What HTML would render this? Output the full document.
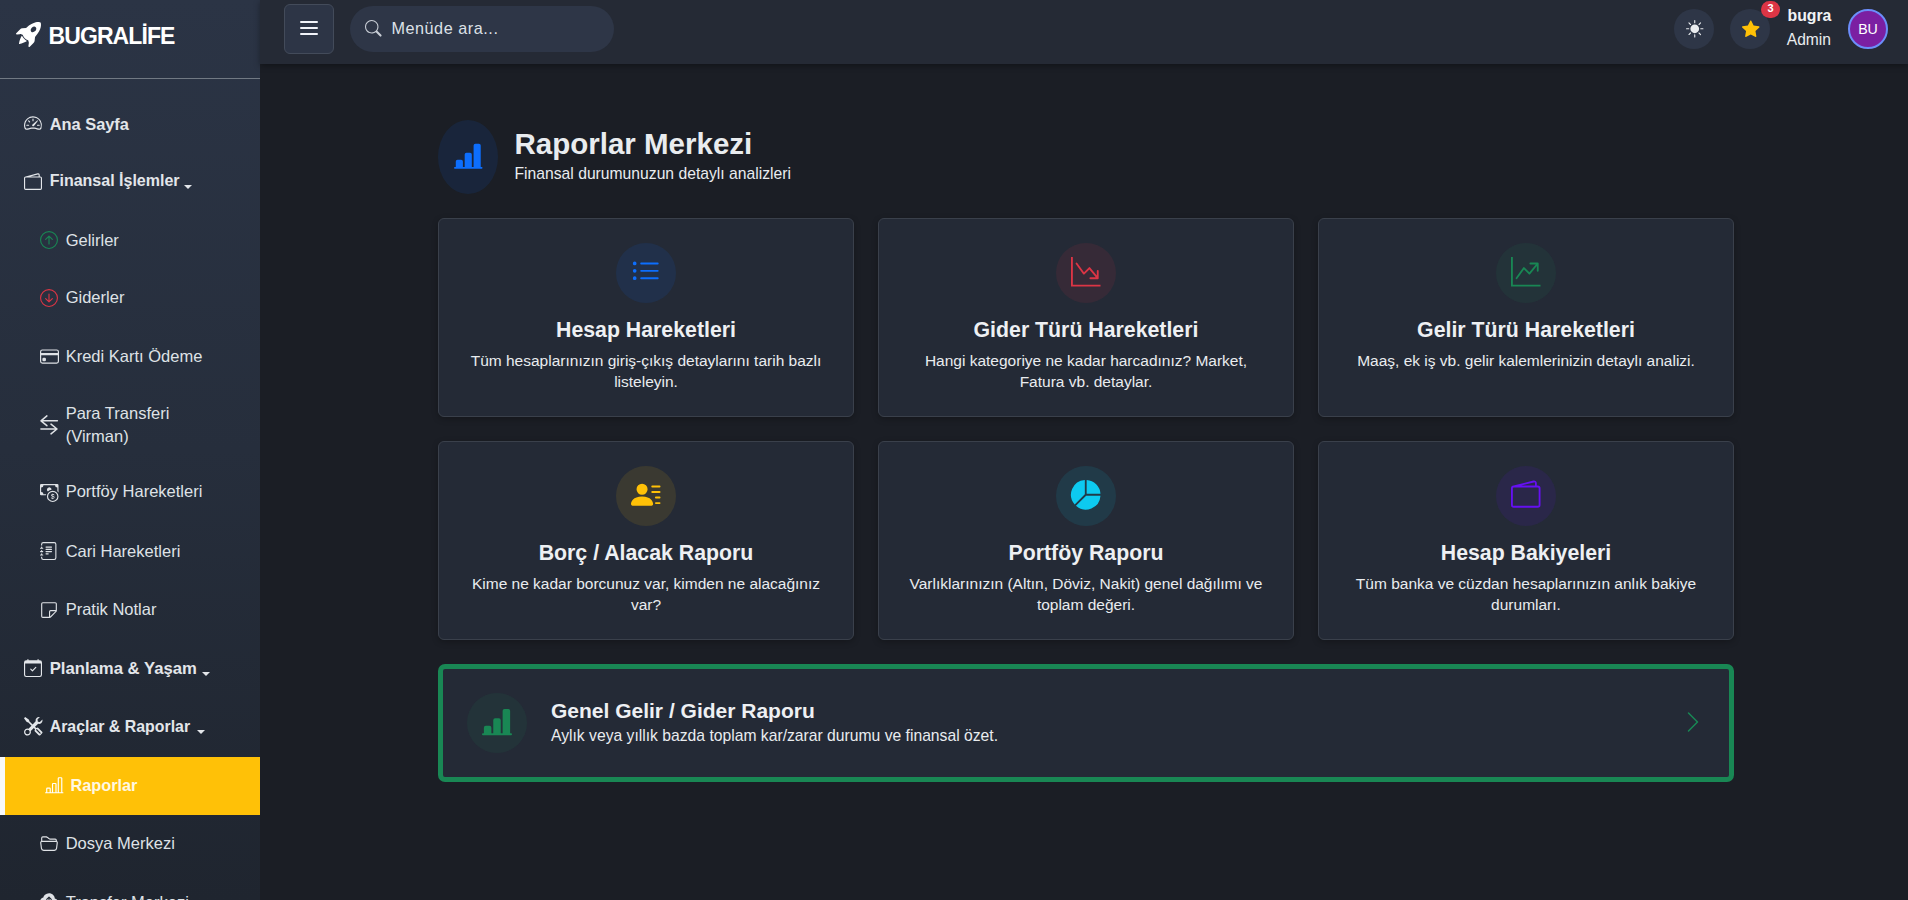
<!DOCTYPE html>
<html lang="tr"><head><meta charset="utf-8"><title>Raporlar Merkezi</title><style>
*{margin:0;padding:0;box-sizing:border-box}
html,body{width:1908px;height:900px;overflow:hidden;background:#1b1e25;font-family:"Liberation Sans",sans-serif}
.t{position:absolute;white-space:nowrap}
.a{position:absolute}
svg{position:absolute;overflow:visible}
</style></head><body>
<div class="a" style="left:0;top:0;width:260px;height:900px;background:linear-gradient(180deg,#2b3445 0%,#262e3c 50%,#1f252f 100%)"></div>
<svg style="left:15.6px;top:22.3px;" width="25" height="25" viewBox="0 0 16 16" fill="#ffffff" preserveAspectRatio="none"><path d="M12.17 9.53c2.307-2.592 3.278-4.684 3.641-6.218.21-.887.214-1.58.16-2.065a3.6 3.6 0 0 0-.108-.563 2 2 0 0 0-.078-.23V.453c-.073-.164-.168-.234-.352-.295a2 2 0 0 0-.16-.045 4 4 0 0 0-.57-.093c-.49-.044-1.19-.03-2.08.188-1.536.374-3.618 1.343-6.161 3.604l-2.4.238h-.006a2.550 2.550 0 0 0-1.524.734L.15 7.17a.512.512 0 0 0 .433.868l1.896-.271c.28-.04.592.013.955.132.232.076.437.16.655.248l.203.083c.196.816.66 1.58 1.275 2.195.613.614 1.376 1.08 2.191 1.277l.082.202c.089.218.173.424.249.657.118.363.172.676.132.956l-.271 1.9a.512.512 0 0 0 .867.433l2.382-2.386c.41-.41.668-.949.732-1.526zm.11-3.699c-.797.8-1.93.961-2.528.362-.598-.6-.436-1.733.361-2.532.798-.799 1.93-.96 2.528-.361s.437 1.732-.36 2.531Z"/><path d="M5.205 10.787a7.6 7.6 0 0 0 1.804 1.352c-1.118 1.007-4.929 2.028-5.054 1.903-.126-.127.737-4.189 1.839-5.180.346.690.837 1.350 1.411 1.925"/></svg>
<div class="t" style="left:48.5px;top:21.73px;font-size:23px;line-height:29px;font-weight:700;color:#ffffff;letter-spacing:-0.9px;">BUGRALİFE</div>
<div class="a" style="left:0;top:78px;width:260px;height:1px;background:#717983"></div>
<svg style="left:24px;top:113.5px;" width="18" height="18" viewBox="0 0 16 16" fill="#e3e6ea" preserveAspectRatio="none"><path d="M8 4a.5.5 0 0 1 .5.5V6a.5.5 0 0 1-1 0V4.5A.5.5 0 0 1 8 4M3.732 5.732a.5.5 0 0 1 .707 0l.915.914a.5.5 0 1 1-.708.708l-.914-.915a.5.5 0 0 1 0-.707M2 10a.5.5 0 0 1 .5-.5h1.586a.5.5 0 0 1 0 1H2.5A.5.5 0 0 1 2 10m9.5 0a.5.5 0 0 1 .5-.5h1.5a.5.5 0 0 1 0 1H12a.5.5 0 0 1-.5-.5m.754-4.246a.39.39 0 0 0-.527-.02L7.547 9.310a.91.91 0 1 0 1.302 1.258l3.434-4.297a.39.39 0 0 0-.029-.518z"/><path fill-rule="evenodd" d="M0 10a8 8 0 1 1 15.547 2.661c-.442 1.253-1.845 1.602-2.932 1.25C11.309 13.488 9.475 13 8 13c-1.474 0-3.310.488-4.615.911-1.087.352-2.490.003-2.932-1.250A8 8 0 0 1 0 10m8-7a7 7 0 0 0-6.603 9.329c.203.575.923.876 1.680.630C4.397 12.533 6.358 12 8 12s3.604.532 4.923.96c.757.245 1.477-.056 1.680-.631A7 7 0 0 0 8 3"/></svg>
<div class="t" style="left:49.7px;top:113.62px;font-size:16.4px;line-height:20px;font-weight:700;color:#e3e6ea;">Ana Sayfa</div>
<svg style="left:24px;top:172.7px;" width="18" height="18" viewBox="0 0 16 16" fill="#e3e6ea" preserveAspectRatio="none"><path d="M12.136.326A1.5 1.5 0 0 1 14 1.78V3h.5A1.5 1.5 0 0 1 16 4.5v9a1.5 1.5 0 0 1-1.5 1.5h-13A1.5 1.5 0 0 1 0 13.5v-9a1.5 1.5 0 0 1 1.432-1.499zM5.562 3H13V1.78a.5.5 0 0 0-.621-.484zM1.5 4a.5.5 0 0 0-.5.5v9a.5.5 0 0 0 .5.5h13a.5.5 0 0 0 .5-.5v-9a.5.5 0 0 0-.5-.5z"/></svg>
<div class="t" style="left:49.7px;top:171.26px;font-size:16.0px;line-height:20px;font-weight:700;color:#e3e6ea;">Finansal İşlemler</div>
<div class="a" style="left:184px;top:184.8px;width:0;height:0;border-left:4px solid transparent;border-right:4px solid transparent;border-top:4.5px solid #e3e6ea"></div>
<svg style="left:40px;top:231px;" width="18" height="18" viewBox="0 0 16 16" fill="#198754" preserveAspectRatio="none"><path fill-rule="evenodd" d="M1 8a7 7 0 1 0 14 0A7 7 0 0 0 1 8m15 0A8 8 0 1 1 0 8a8 8 0 0 1 16 0m-7.5 3.5a.5.5 0 0 1-1 0V5.707L5.354 7.854a.5.5 0 1 1-.708-.708l3-3a.5.5 0 0 1 .708 0l3 3a.5.5 0 0 1-.708.708L8.5 5.707z"/></svg>
<div class="t" style="left:65.7px;top:229.78px;font-size:16.5px;line-height:21px;font-weight:400;color:#dfe2e6;">Gelirler</div>
<svg style="left:40px;top:289px;" width="18" height="18" viewBox="0 0 16 16" fill="#dc3545" preserveAspectRatio="none"><path fill-rule="evenodd" d="M1 8a7 7 0 1 0 14 0A7 7 0 0 0 1 8m15 0A8 8 0 1 1 0 8a8 8 0 0 1 16 0M8.5 4.5a.5.5 0 0 0-1 0v5.793L5.354 8.146a.5.5 0 1 0-.708.708l3 3a.5.5 0 0 0 .708 0l3-3a.5.5 0 0 0-.708-.708L8.5 10.293z"/></svg>
<div class="t" style="left:65.7px;top:287.38px;font-size:16.5px;line-height:21px;font-weight:400;color:#dfe2e6;">Giderler</div>
<svg style="left:39.7px;top:347.3px;" width="19" height="19" viewBox="0 0 16 16" fill="#dfe2e6" preserveAspectRatio="none"><path d="M0 4a2 2 0 0 1 2-2h12a2 2 0 0 1 2 2v8a2 2 0 0 1-2 2H2a2 2 0 0 1-2-2zm2-1a1 1 0 0 0-1 1v1h14V4a1 1 0 0 0-1-1zm13 4H1v5a1 1 0 0 0 1 1h12a1 1 0 0 0 1-1z"/><path d="M2 10a1 1 0 0 1 1-1h1a1 1 0 0 1 1 1v1a1 1 0 0 1-1 1H3a1 1 0 0 1-1-1z"/></svg>
<div class="t" style="left:65.7px;top:346.08px;font-size:16.5px;line-height:21px;font-weight:400;color:#dfe2e6;">Kredi Kartı Ödeme</div>
<svg style="left:40px;top:415px" width="18" height="20" viewBox="0 0 18 20" fill="none" stroke="#dfe2e6" stroke-width="1.5" stroke-linecap="round" stroke-linejoin="round"><path d="M1 5.8H17.4M6.9 0.9L1 5.8L6.9 10.7M0.9 14H17M11 9.1L17 14L11 18.9"/></svg>
<div class="t" style="left:65.7px;top:403.38px;font-size:16.5px;line-height:21px;font-weight:400;color:#dfe2e6;">Para Transferi</div>
<div class="t" style="left:65.7px;top:426.18px;font-size:16.5px;line-height:21px;font-weight:400;color:#dfe2e6;">(Virman)</div>
<svg style="left:39.5px;top:484px;" width="18.5" height="18" viewBox="0 0 16 16" fill="#dfe2e6" preserveAspectRatio="none"><path fill-rule="evenodd" d="M11 15a4 4 0 1 0 0-8 4 4 0 0 0 0 8m5-4a5 5 0 1 1-10 0 5 5 0 0 1 10 0"/><path d="M9.438 11.944c.047.596.518 1.06 1.363 1.116v.44h.375v-.443c.875-.061 1.386-.529 1.386-1.207 0-.618-.39-.936-1.09-1.1l-.296-.07v-1.2c.376.043.614.248.671.532h.658c-.047-.575-.54-1.024-1.329-1.073V8.5h-.375v.45c-.747.073-1.255.522-1.255 1.158 0 .562.378.92 1.007 1.066l.248.061v1.272c-.384-.058-.639-.27-.696-.563h-.668zm1.36-1.354c-.369-.085-.569-.26-.569-.522 0-.294.216-.514.572-.578v1.1zm.432.746c.449.104.655.272.655.569 0 .339-.257.571-.709.614v-1.195z"/><path d="M1 0a1 1 0 0 0-1 1v8a1 1 0 0 0 1 1h4.083q.088-.517.258-1H3a2 2 0 0 0-2-2V3a2 2 0 0 0 2-2h10a2 2 0 0 0 2 2v3.528c.38.34.717.728 1 1.154V1a1 1 0 0 0-1-1z"/><path d="M9.998 5.083 10 5a2 2 0 1 0-3.132 1.65 6 6 0 0 1 3.13-1.567"/></svg>
<div class="t" style="left:65.7px;top:481.38px;font-size:16.5px;line-height:21px;font-weight:400;color:#dfe2e6;">Portföy Hareketleri</div>
<svg style="left:40px;top:542px;" width="17.5" height="18" viewBox="0 0 16 16" fill="#dfe2e6" preserveAspectRatio="none"><path d="M5 10.5a.5.5 0 0 1 .5-.5h2a.5.5 0 0 1 0 1h-2a.5.5 0 0 1-.5-.5m0-2a.5.5 0 0 1 .5-.5h5a.5.5 0 0 1 0 1h-5a.5.5 0 0 1-.5-.5m0-2a.5.5 0 0 1 .5-.5h5a.5.5 0 0 1 0 1h-5a.5.5 0 0 1-.5-.5m0-2a.5.5 0 0 1 .5-.5h5a.5.5 0 0 1 0 1h-5a.5.5 0 0 1-.5-.5"/><path d="M3 0h10a2 2 0 0 1 2 2v12a2 2 0 0 1-2 2H3a2 2 0 0 1-2-2v-1h1v1a1 1 0 0 0 1 1h10a1 1 0 0 0 1-1V2a1 1 0 0 0-1-1H3a1 1 0 0 0-1 1v1H1V2a2 2 0 0 1 2-2"/><path d="M1 5v-.5a.5.5 0 0 1 1 0V5h.5a.5.5 0 0 1 0 1h-2a.5.5 0 0 1 0-1zm0 3v-.5a.5.5 0 0 1 1 0V8h.5a.5.5 0 0 1 0 1h-2a.5.5 0 0 1 0-1zm0 3v-.5a.5.5 0 0 1 1 0v.5h.5a.5.5 0 0 1 0 1h-2a.5.5 0 0 1 0-1z"/></svg>
<div class="t" style="left:65.7px;top:540.78px;font-size:16.5px;line-height:21px;font-weight:400;color:#dfe2e6;">Cari Hareketleri</div>
<svg style="left:40px;top:601px;" width="18" height="18" viewBox="0 0 16 16" fill="#dfe2e6" preserveAspectRatio="none"><path d="M2.5 1A1.5 1.5 0 0 0 1 2.5v11A1.5 1.5 0 0 0 2.5 15h6.086a1.5 1.5 0 0 0 1.06-.44l4.915-4.914A1.5 1.5 0 0 0 15 8.586V2.5A1.5 1.5 0 0 0 13.5 1zM2 2.5a.5.5 0 0 1 .5-.5h11a.5.5 0 0 1 .5.5V8H9.5A1.5 1.5 0 0 0 8 9.5V14H2.5a.5.5 0 0 1-.5-.5zm7 11.293V9.5a.5.5 0 0 1 .5-.5h4.293z"/></svg>
<div class="t" style="left:65.7px;top:598.78px;font-size:16.5px;line-height:21px;font-weight:400;color:#dfe2e6;">Pratik Notlar</div>
<svg style="left:24px;top:659px;" width="18" height="18" viewBox="0 0 16 16" fill="#e3e6ea" preserveAspectRatio="none"><path d="M10.854 7.146a.5.5 0 0 1 0 .708l-3 3a.5.5 0 0 1-.708 0l-1.5-1.5a.5.5 0 1 1 .708-.708L7.5 9.793l2.646-2.647a.5.5 0 0 1 .708 0"/><path d="M3.5 0a.5.5 0 0 1 .5.5V1h8V.5a.5.5 0 0 1 1 0V1h1a2 2 0 0 1 2 2v11a2 2 0 0 1-2 2H2a2 2 0 0 1-2-2V3a2 2 0 0 1 2-2h1V.5a.5.5 0 0 1 .5-.5M1 4v10a1 1 0 0 0 1 1h12a1 1 0 0 0 1-1V4z"/></svg>
<div class="t" style="left:49.7px;top:657.91px;font-size:16.7px;line-height:21px;font-weight:700;color:#e3e6ea;">Planlama &amp; Yaşam</div>
<div class="a" style="left:202px;top:672.2px;width:0;height:0;border-left:4px solid transparent;border-right:4px solid transparent;border-top:4.5px solid #e3e6ea"></div>
<svg style="left:24px;top:716.5px;" width="18.5" height="18.5" viewBox="0 0 16 16" fill="#e3e6ea" preserveAspectRatio="none"><path d="M1 0 0 1l2.2 3.081a1 1 0 0 0 .815.419h.07a1 1 0 0 1 .708.293l2.675 2.675-2.617 2.654A3.003 3.003 0 0 0 0 13a3 3 0 1 0 5.878-.851l2.654-2.617.968.968-.305.914a1 1 0 0 0 .242 1.023l3.270 3.270a.997.997 0 0 0 1.414 0l1.586-1.586a.997.997 0 0 0 0-1.414l-3.270-3.270a1 1 0 0 0-1.023-.242L10.5 9.5l-.96-.96 2.680-2.643A3.005 3.005 0 0 0 16 3q0-.405-.102-.777l-2.140 2.141L12 4l-.364-1.757L13.777.102a3 3 0 0 0-3.675 3.680L7.462 6.460 4.793 3.793a1 1 0 0 1-.293-.707v-.071a1 1 0 0 0-.419-.814zm9.646 10.646a.5.5 0 0 1 .708 0l2.914 2.915a.5.5 0 0 1-.707.707l-2.915-2.914a.5.5 0 0 1 0-.708M3 11l.471.242.529.026.287.445.445.287.026.529L5 13l-.242.471-.026.529-.445.287-.287.445-.529.026L3 15l-.471-.242L2 14.732l-.287-.445L1.268 14l-.026-.529L1 13l.242-.471.026-.529.445-.287.287-.445.529-.026z"/></svg>
<div class="t" style="left:49.7px;top:716.79px;font-size:15.9px;line-height:20px;font-weight:700;color:#e3e6ea;">Araçlar &amp; Raporlar</div>
<div class="a" style="left:197px;top:730.3px;width:0;height:0;border-left:4px solid transparent;border-right:4px solid transparent;border-top:4.5px solid #e3e6ea"></div>
<div class="a" style="left:0;top:757px;width:260px;height:58px;background:#ffc107;border-left:5px solid #f8f9fa"></div>
<svg style="left:44.5px;top:776px;" width="18.5" height="18.5" viewBox="0 0 16 16" fill="#ffffff" preserveAspectRatio="none"><path d="M11 2a1 1 0 0 1 1-1h2a1 1 0 0 1 1 1v12h.5a.5.5 0 0 1 0 1H.5a.5.5 0 0 1 0-1H1v-3a1 1 0 0 1 1-1h2a1 1 0 0 1 1 1v3h1V7a1 1 0 0 1 1-1h2a1 1 0 0 1 1 1v7h1zm1 12h2V2h-2zm-3 0V7H7v7zm-5 0v-3H2v3z"/></svg>
<div class="t" style="left:70.5px;top:774.85px;font-size:16.3px;line-height:20px;font-weight:700;color:#fff8e3;">Raporlar</div>
<svg style="left:39.7px;top:834px;" width="18" height="18" viewBox="0 0 16 16" fill="#dfe2e6" preserveAspectRatio="none"><path d="M1 3.5A1.5 1.5 0 0 1 2.5 2h2.764c.958 0 1.760.560 2.311 1.184C7.985 3.648 8.480 4 9 4h4.5A1.5 1.5 0 0 1 15 5.5v.64c.570.265.940.876.856 1.546l-.640 5.124A2.5 2.5 0 0 1 12.733 15H3.266a2.5 2.5 0 0 1-2.481-2.190l-.640-5.124A1.5 1.5 0 0 1 1 6.140zM2 6h12v-.5a.5.5 0 0 0-.5-.5H9c-.964 0-1.710-.629-2.174-1.154C6.374 3.334 5.820 3 5.264 3H2.5a.5.5 0 0 0-.5.5zm-.367 1a.5.5 0 0 0-.496.562l.640 5.124A1.5 1.5 0 0 0 3.266 14h9.468a1.5 1.5 0 0 0 1.489-1.314l.640-5.124A.5.5 0 0 0 14.367 7z"/></svg>
<div class="t" style="left:65.7px;top:832.78px;font-size:16.5px;line-height:21px;font-weight:400;color:#dfe2e6;">Dosya Merkezi</div>
<svg style="left:40px;top:891.4px;" width="18" height="18" viewBox="0 0 16 16" fill="#dfe2e6" preserveAspectRatio="none"><path d="M8 2a5.53 5.53 0 0 0-3.594 1.342c-.766.66-1.321 1.52-1.464 2.383C1.266 6.095 0 7.555 0 9.318 0 11.366 1.708 13 3.781 13h8.906C14.502 13 16 11.57 16 9.773c0-1.636-1.242-2.969-2.834-3.194C12.923 3.999 10.69 2 8 2m2.354 5.146a.5.5 0 0 1-.708.708L8.5 6.707V10.5a.5.5 0 0 1-1 0V6.707L6.354 7.854a.5.5 0 1 1-.708-.708l2-2a.5.5 0 0 1 .708 0z"/></svg>
<div class="t" style="left:65.7px;top:891.68px;font-size:16.5px;line-height:21px;font-weight:400;color:#dfe2e6;">Transfer Merkezi</div>
<div class="a" style="left:260px;top:0;width:1648px;height:64px;background:#252a35;box-shadow:0 2px 6px rgba(0,0,0,.35)"></div>
<div class="a" style="left:284px;top:4px;width:50px;height:50px;background:#2d3546;border:1px solid #434b5a;border-radius:6px"></div>
<div class="a" style="left:300px;top:20.9px;width:18px;height:2.2px;background:#f1f3f9;border-radius:1px"></div><div class="a" style="left:300px;top:26.9px;width:18px;height:2.2px;background:#f1f3f9;border-radius:1px"></div><div class="a" style="left:300px;top:32.9px;width:18px;height:2.2px;background:#f1f3f9;border-radius:1px"></div>
<div class="a" style="left:350px;top:6px;width:264px;height:46px;background:#2e3647;border-radius:23px"></div>
<svg style="left:364.6px;top:19.9px;" width="16.6" height="16.6" viewBox="0 0 16 16" fill="#c9ced6" preserveAspectRatio="none"><path d="M11.742 10.344a6.5 6.5 0 1 0-1.397 1.398h-.001q.044.06.098.115l3.85 3.85a1 1 0 0 0 1.415-1.414l-3.85-3.85a1 1 0 0 0-.115-.1zM12 6.5a5.5 5.5 0 1 1-11 0 5.5 5.5 0 0 1 11 0"/></svg>
<div class="t" style="left:391.4px;top:18.39px;font-size:16.2px;line-height:20px;font-weight:400;color:#dde1e7;letter-spacing:0.55px;">Menüde ara...</div>
<div class="a" style="left:1674px;top:9px;width:40px;height:40px;border-radius:50%;background:#2e3647"></div>
<svg style="left:1685.5px;top:19.5px;" width="17.5" height="17.5" viewBox="0 0 16 16" fill="#e9ecef" preserveAspectRatio="none"><path d="M8 12a4 4 0 1 0 0-8 4 4 0 0 0 0 8M8 0a.5.5 0 0 1 .5.5v2a.5.5 0 0 1-1 0v-2A.5.5 0 0 1 8 0m0 13a.5.5 0 0 1 .5.5v2a.5.5 0 0 1-1 0v-2A.5.5 0 0 1 8 13m8-5a.5.5 0 0 1-.5.5h-2a.5.5 0 0 1 0-1h2a.5.5 0 0 1 .5.5M3 8a.5.5 0 0 1-.5.5h-2a.5.5 0 0 1 0-1h2A.5.5 0 0 1 3 8m10.657-5.657a.5.5 0 0 1 0 .707l-1.414 1.415a.5.5 0 1 1-.707-.708l1.414-1.414a.5.5 0 0 1 .707 0m-9.193 9.193a.5.5 0 0 1 0 .707L3.050 13.657a.5.5 0 0 1-.707-.707l1.414-1.414a.5.5 0 0 1 .707 0m9.193 2.121a.5.5 0 0 1-.707 0l-1.414-1.414a.5.5 0 0 1 .707-.707l1.414 1.414a.5.5 0 0 1 0 .707M4.464 4.465a.5.5 0 0 1-.707 0L2.343 3.050a.5.5 0 1 1 .707-.707l1.414 1.414a.5.5 0 0 1 0 .708"/></svg>
<div class="a" style="left:1730px;top:9px;width:40px;height:40px;border-radius:50%;background:#2e3647"></div>
<svg style="left:1741.5px;top:19.5px;" width="17.5" height="17.5" viewBox="0 0 16 16" fill="#ffc107" preserveAspectRatio="none"><path d="M3.612 15.443c-.386.198-.824-.149-.746-.592l.83-4.73L.173 6.765c-.329-.314-.158-.888.283-.95l4.898-.696L7.538.792c.197-.39.73-.39.927 0l2.184 4.327 4.898.696c.441.062.612.636.282.95l-3.522 3.356.83 4.73c.078.443-.36.79-.746.592L8 13.187l-4.389 2.256z"/></svg>
<div class="a" style="left:1761px;top:0.5px;width:19px;height:17px;border-radius:9px;background:#dc3545"></div>
<div class="t" style="left:1761.0px;width:19px;text-align:center;top:0.99px;font-size:11px;line-height:14px;font-weight:700;color:#ffffff;">3</div>
<div class="t" style="left:1787.5px;top:5.53px;font-size:15.8px;line-height:20px;font-weight:700;color:#f1f3f5;">bugra</div>
<div class="t" style="left:1786.8px;top:29.59px;font-size:15.6px;line-height:20px;font-weight:400;color:#e9ecef;">Admin</div>
<div class="a" style="left:1848px;top:9px;width:40px;height:40px;border-radius:50%;background:#7b1fa2;border:2px solid #6c8dfa"></div>
<div class="t" style="left:1848.0px;width:40px;text-align:center;top:20.48px;font-size:14.2px;line-height:18px;font-weight:400;color:#ffffff;">BU</div>
<div class="a" style="left:438px;top:120px;width:60px;height:74px;border-radius:50%;background:rgba(13,110,253,.1)"></div>
<svg style="left:453.8px;top:141.6px;" width="28.5" height="28.5" viewBox="0 0 16 16" fill="#0d6efd" preserveAspectRatio="none"><path d="M11 2a1 1 0 0 1 1-1h2a1 1 0 0 1 1 1v12h.5a.5.5 0 0 1 0 1H.5a.5.5 0 0 1 0-1H1v-3a1 1 0 0 1 1-1h2a1 1 0 0 1 1 1v3h1V7a1 1 0 0 1 1-1h2a1 1 0 0 1 1 1v7h1z"/></svg>
<div class="t" style="left:514.5px;top:125.48px;font-size:29.5px;line-height:37px;font-weight:700;color:#e9ecef;">Raporlar Merkezi</div>
<div class="t" style="left:514.5px;top:164.16px;font-size:15.7px;line-height:20px;font-weight:400;color:#e9ecef;">Finansal durumunuzun detaylı analizleri</div>
<div class="a" style="left:438px;top:218px;width:416px;height:199px;background:#242a36;border:1px solid #3a404b;border-radius:6px;box-shadow:0 2px 6px rgba(0,0,0,.25)"></div>
<div class="a" style="left:616px;top:243px;width:60px;height:60px;border-radius:50%;background:rgba(13,110,253,.1)"></div>
<svg style="left:631px;top:256.5px;" width="29.5" height="29.5" viewBox="0 0 16 16" fill="#0d6efd" preserveAspectRatio="none"><path fill-rule="evenodd" d="M5 11.5a.5.5 0 0 1 .5-.5h9a.5.5 0 0 1 0 1h-9a.5.5 0 0 1-.5-.5m0-4a.5.5 0 0 1 .5-.5h9a.5.5 0 0 1 0 1h-9a.5.5 0 0 1-.5-.5m0-4a.5.5 0 0 1 .5-.5h9a.5.5 0 0 1 0 1h-9a.5.5 0 0 1-.5-.5m-3 1a1 1 0 1 0 0-2 1 1 0 0 0 0 2m0 4a1 1 0 1 0 0-2 1 1 0 0 0 0 2m0 4a1 1 0 1 0 0-2 1 1 0 0 0 0 2"/></svg>
<div class="t" style="left:446.0px;width:400px;text-align:center;top:317.12px;font-size:21.3px;line-height:27px;font-weight:700;color:#eef0f3;">Hesap Hareketleri</div>
<div class="t" style="left:441.0px;width:410px;text-align:center;top:350.73px;font-size:15.5px;line-height:19px;font-weight:400;color:#e9ecef;">Tüm hesaplarınızın giriş-çıkış detaylarını tarih bazlı</div>
<div class="t" style="left:441.0px;width:410px;text-align:center;top:371.73px;font-size:15.5px;line-height:19px;font-weight:400;color:#e9ecef;">listeleyin.</div>
<div class="a" style="left:878px;top:218px;width:416px;height:199px;background:#242a36;border:1px solid #3a404b;border-radius:6px;box-shadow:0 2px 6px rgba(0,0,0,.25)"></div>
<div class="a" style="left:1056px;top:243px;width:60px;height:60px;border-radius:50%;background:rgba(220,53,69,.1)"></div>
<svg style="left:1071px;top:256.5px;" width="29.5" height="29.5" viewBox="0 0 16 16" fill="#dc3545" preserveAspectRatio="none"><path fill-rule="evenodd" d="M0 0h1v15h15v1H0zm10 11.5a.5.5 0 0 0 .5.5h4a.5.5 0 0 0 .5-.5v-4a.5.5 0 0 0-1 0v2.6l-3.613-4.417a.5.5 0 0 0-.74-.037L7.06 8.233 3.404 3.206a.5.5 0 0 0-.808.588l4 5.5a.5.5 0 0 0 .758.06l2.609-2.61L13.445 11H10.5a.5.5 0 0 0-.5.5"/></svg>
<div class="t" style="left:886.0px;width:400px;text-align:center;top:317.12px;font-size:21.3px;line-height:27px;font-weight:700;color:#eef0f3;">Gider Türü Hareketleri</div>
<div class="t" style="left:881.0px;width:410px;text-align:center;top:350.73px;font-size:15.5px;line-height:19px;font-weight:400;color:#e9ecef;">Hangi kategoriye ne kadar harcadınız? Market,</div>
<div class="t" style="left:881.0px;width:410px;text-align:center;top:371.73px;font-size:15.5px;line-height:19px;font-weight:400;color:#e9ecef;">Fatura vb. detaylar.</div>
<div class="a" style="left:1318px;top:218px;width:416px;height:199px;background:#242a36;border:1px solid #3a404b;border-radius:6px;box-shadow:0 2px 6px rgba(0,0,0,.25)"></div>
<div class="a" style="left:1496px;top:243px;width:60px;height:60px;border-radius:50%;background:rgba(25,135,84,.1)"></div>
<svg style="left:1511px;top:256.5px;" width="29.5" height="29.5" viewBox="0 0 16 16" fill="#198754" preserveAspectRatio="none"><path fill-rule="evenodd" d="M0 0h1v15h15v1H0zm10 3.5a.5.5 0 0 1 .5-.5h4a.5.5 0 0 1 .5.5v4a.5.5 0 0 1-1 0V4.9l-3.613 4.417a.5.5 0 0 1-.74.037L7.06 6.767l-3.656 5.027a.5.5 0 0 1-.808-.588l4-5.5a.5.5 0 0 1 .758-.06l2.609 2.61L13.445 4H10.5a.5.5 0 0 1-.5-.5"/></svg>
<div class="t" style="left:1326.0px;width:400px;text-align:center;top:317.12px;font-size:21.3px;line-height:27px;font-weight:700;color:#eef0f3;">Gelir Türü Hareketleri</div>
<div class="t" style="left:1321.0px;width:410px;text-align:center;top:350.73px;font-size:15.5px;line-height:19px;font-weight:400;color:#e9ecef;">Maaş, ek iş vb. gelir kalemlerinizin detaylı analizi.</div>
<div class="a" style="left:438px;top:441px;width:416px;height:199px;background:#242a36;border:1px solid #3a404b;border-radius:6px;box-shadow:0 2px 6px rgba(0,0,0,.25)"></div>
<div class="a" style="left:616px;top:466px;width:60px;height:60px;border-radius:50%;background:rgba(255,193,7,.1)"></div>
<svg style="left:631px;top:479.5px;" width="29.5" height="29.5" viewBox="0 0 16 16" fill="#ffc107" preserveAspectRatio="none"><path d="M6 8a3 3 0 1 0 0-6 3 3 0 0 0 0 6m-5 6s-1 0-1-1 1-4 6-4 6 3 6 4-1 1-1 1zM11 3.5a.5.5 0 0 1 .5-.5h4a.5.5 0 0 1 0 1h-4a.5.5 0 0 1-.5-.5m.5 2.5a.5.5 0 0 0 0 1h4a.5.5 0 0 0 0-1zm2 3a.5.5 0 0 0 0 1h2a.5.5 0 0 0 0-1zm0 3a.5.5 0 0 0 0 1h2a.5.5 0 0 0 0-1z"/></svg>
<div class="t" style="left:446.0px;width:400px;text-align:center;top:540.12px;font-size:21.3px;line-height:27px;font-weight:700;color:#eef0f3;">Borç / Alacak Raporu</div>
<div class="t" style="left:441.0px;width:410px;text-align:center;top:573.73px;font-size:15.5px;line-height:19px;font-weight:400;color:#e9ecef;">Kime ne kadar borcunuz var, kimden ne alacağınız</div>
<div class="t" style="left:441.0px;width:410px;text-align:center;top:594.73px;font-size:15.5px;line-height:19px;font-weight:400;color:#e9ecef;">var?</div>
<div class="a" style="left:878px;top:441px;width:416px;height:199px;background:#242a36;border:1px solid #3a404b;border-radius:6px;box-shadow:0 2px 6px rgba(0,0,0,.25)"></div>
<div class="a" style="left:1056px;top:466px;width:60px;height:60px;border-radius:50%;background:rgba(13,202,240,.1)"></div>
<svg style="left:1071px;top:479.5px;" width="29.5" height="29.5" viewBox="0 0 16 16" fill="#0dcaf0" preserveAspectRatio="none"><path d="M15.985 8.5H8.207l-5.5 5.5a8 8 0 0 0 13.277-5.5zM2 13.292A8 8 0 0 1 7.5.015v7.778zM8.5.015V7.5h7.485A8 8 0 0 0 8.5.015"/></svg>
<div class="t" style="left:886.0px;width:400px;text-align:center;top:540.12px;font-size:21.3px;line-height:27px;font-weight:700;color:#eef0f3;">Portföy Raporu</div>
<div class="t" style="left:881.0px;width:410px;text-align:center;top:573.73px;font-size:15.5px;line-height:19px;font-weight:400;color:#e9ecef;">Varlıklarınızın (Altın, Döviz, Nakit) genel dağılımı ve</div>
<div class="t" style="left:881.0px;width:410px;text-align:center;top:594.73px;font-size:15.5px;line-height:19px;font-weight:400;color:#e9ecef;">toplam değeri.</div>
<div class="a" style="left:1318px;top:441px;width:416px;height:199px;background:#242a36;border:1px solid #3a404b;border-radius:6px;box-shadow:0 2px 6px rgba(0,0,0,.25)"></div>
<div class="a" style="left:1496px;top:466px;width:60px;height:60px;border-radius:50%;background:rgba(102,16,242,.1)"></div>
<svg style="left:1511px;top:479.5px;" width="29.5" height="29.5" viewBox="0 0 16 16" fill="#6610f2" preserveAspectRatio="none"><path d="M12.136.326A1.5 1.5 0 0 1 14 1.78V3h.5A1.5 1.5 0 0 1 16 4.5v9a1.5 1.5 0 0 1-1.5 1.5h-13A1.5 1.5 0 0 1 0 13.5v-9a1.5 1.5 0 0 1 1.432-1.499zM5.562 3H13V1.78a.5.5 0 0 0-.621-.484zM1.5 4a.5.5 0 0 0-.5.5v9a.5.5 0 0 0 .5.5h13a.5.5 0 0 0 .5-.5v-9a.5.5 0 0 0-.5-.5z"/></svg>
<div class="t" style="left:1326.0px;width:400px;text-align:center;top:540.12px;font-size:21.3px;line-height:27px;font-weight:700;color:#eef0f3;">Hesap Bakiyeleri</div>
<div class="t" style="left:1321.0px;width:410px;text-align:center;top:573.73px;font-size:15.5px;line-height:19px;font-weight:400;color:#e9ecef;">Tüm banka ve cüzdan hesaplarınızın anlık bakiye</div>
<div class="t" style="left:1321.0px;width:410px;text-align:center;top:594.73px;font-size:15.5px;line-height:19px;font-weight:400;color:#e9ecef;">durumları.</div>
<div class="a" style="left:438px;top:664px;width:1296px;height:118px;background:#242a36;border:5px solid #198754;border-radius:7px"></div>
<div class="a" style="left:467px;top:693px;width:60px;height:60px;border-radius:50%;background:rgba(25,135,84,.1)"></div>
<svg style="left:481.8px;top:707px;" width="30" height="30" viewBox="0 0 16 16" fill="#198754" preserveAspectRatio="none"><path d="M11 2a1 1 0 0 1 1-1h2a1 1 0 0 1 1 1v12h.5a.5.5 0 0 1 0 1H.5a.5.5 0 0 1 0-1H1v-3a1 1 0 0 1 1-1h2a1 1 0 0 1 1 1v3h1V7a1 1 0 0 1 1-1h2a1 1 0 0 1 1 1v7h1z"/></svg>
<div class="t" style="left:551px;top:698.22px;font-size:21px;line-height:26px;font-weight:700;color:#eef0f3;">Genel Gelir / Gider Raporu</div>
<div class="t" style="left:551px;top:726.36px;font-size:15.7px;line-height:20px;font-weight:400;color:#e9ecef;">Aylık veya yıllık bazda toplam kar/zarar durumu ve finansal özet.</div>
<svg style="left:1681.3px;top:710.3px;" width="24" height="24" viewBox="0 0 16 16" fill="#198754" preserveAspectRatio="none"><path fill-rule="evenodd" d="M4.646 1.646a.5.5 0 0 1 .708 0l6 6a.5.5 0 0 1 0 .708l-6 6a.5.5 0 0 1-.708-.708L10.293 8 4.646 2.354a.5.5 0 0 1 0-.708"/></svg>
</body></html>
